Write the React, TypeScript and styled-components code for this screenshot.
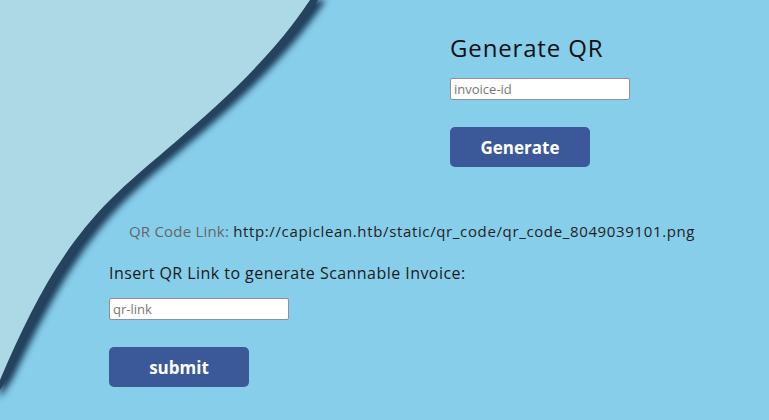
import React from 'react';
import styled, { createGlobalStyle } from 'styled-components';

const GlobalStyle = createGlobalStyle`
  html, body {
    margin: 0;
    padding: 0;
    background: #87ceeb;
    font-family: 'Open Sans', 'Liberation Sans', sans-serif;
  }
`;

const Page = styled.div`
  position: relative;
  width: 769px;
  height: 420px;
  overflow: hidden;
  background: #87ceeb;
`;

// decorative wave that sits behind the forms
const Wave = styled.svg`
  position: absolute;
  top: 0;
  left: 0;
  z-index: 0;
`;

const Content = styled.div`
  position: relative;
  z-index: 1;
  display: flex;
  flex-direction: column;
`;

const Form = styled.div<{ $left: number }>`
  display: flex;
  flex-direction: column;
  align-items: flex-start;
  padding-left: ${(p) => p.$left}px;
`;

const Title = styled.h2`
  margin: 33px 0 0;
  font-size: 24px;
  font-weight: 400;
  line-height: 30px;
  color: #111;
  letter-spacing: 0.85px;
`;

const Label = styled.p<{ $top: number }>`
  margin: ${(p) => p.$top}px 0 0;
  font-size: 16px;
  line-height: 22px;
  color: #1a1a1a;
  letter-spacing: 0.45px;
`;

const Input = styled.input<{ $top?: number }>`
  box-sizing: border-box;
  width: 180px;
  height: 22px;
  margin-top: ${(p) => p.$top ?? 0}px;
  padding: 0 3px;
  border: 1px solid #8f8f9d;
  border-radius: 2px;
  background: #fff;
  font-family: 'Open Sans', sans-serif;
  font-size: 13px;
  &::placeholder {
    color: #777;
  }
`;

const Button = styled.button<{ $top: number }>`
  width: 140px;
  height: 40px;
  margin-top: ${(p) => p.$top}px;
  border: none;
  border-radius: 5px;
  background: #3b5998;
  color: #fff;
  font-family: 'Open Sans', sans-serif;
  font-size: 17px;
  font-weight: 700;
  cursor: pointer;
`;

const LinkRow = styled.div`
  margin-top: 53px;
  padding-left: 129px;
  font-size: 15px;
  line-height: 22px;
  white-space: nowrap;
`;

const LinkLabel = styled.span`
  color: #666;
  letter-spacing: 0.2px;
`;

const LinkUrl = styled.span`
  color: #222;
  letter-spacing: 0.64px;
`;

export default function App() {
  return (
    <Page>
      <GlobalStyle />
      <Wave width="769" height="420" viewBox="0 0 769 420">
        <defs>
          <filter id="blur" x="-20%" y="-20%" width="140%" height="140%">
            <feGaussianBlur stdDeviation="3" />
          </filter>
        </defs>
        <path
          d="M0 0 H326 C266 90 176 150 126 200 C76 250 46 310 12 380 L0 398 Z"
          fill="#1f3d5a"
          filter="url(#blur)"
        />
        <path
          d="M0 0 H318 C258 90 168 150 118 200 C68 250 38 310 6 380 L0 390 Z"
          fill="#25435f"
        />
        <path
          d="M0 0 H310 C250 90 160 150 110 200 C60 250 30 310 0 380 Z"
          fill="#add8e6"
        />
      </Wave>
      <Content>
        <Form $left={450}>
          <Title>Generate QR</Title>
          <Input $top={15} placeholder="invoice-id" />
          <Button $top={27}>Generate</Button>
        </Form>
        <LinkRow>
          <LinkLabel>QR Code Link: </LinkLabel>
          <LinkUrl>http://capiclean.htb/static/qr_code/qr_code_8049039101.png</LinkUrl>
        </LinkRow>
        <Form $left={109}>
          <Label $top={20}>Insert QR Link to generate Scannable Invoice:</Label>
          <Input $top={14} placeholder="qr-link" />
          <Button $top={27}>submit</Button>
        </Form>
      </Content>
    </Page>
  );
}
